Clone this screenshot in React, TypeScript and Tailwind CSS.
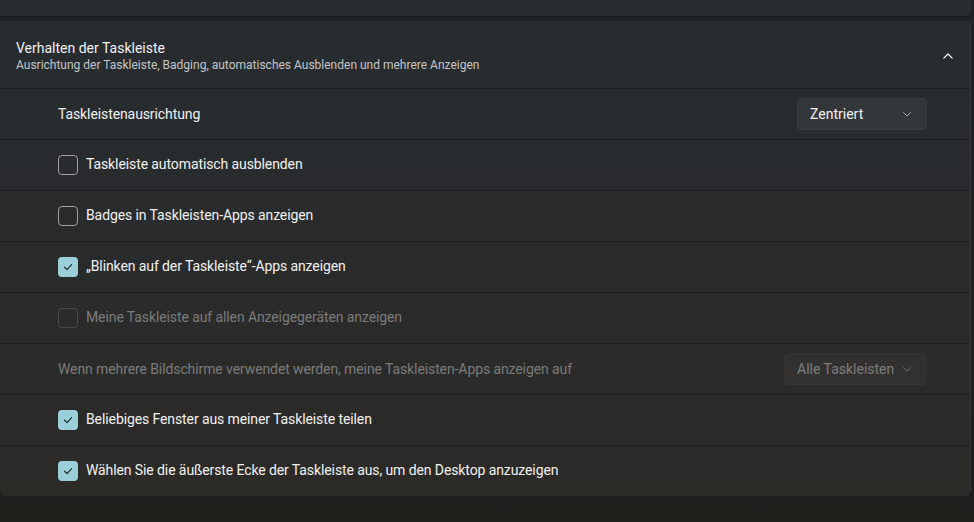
import React from 'react';

const Check = () => (
    <svg width="12" height="12" viewBox="0 0 12 12" fill="none">
        <path d="M2.5 6.2 L5 8.6 L9.6 3.6" stroke="#1b2a2e" strokeWidth="1.2" strokeLinecap="round" strokeLinejoin="round" />
    </svg>
);

const Chevron = ({ up = false, color = '#c8c8c8', size = 10 }: { up?: boolean; color?: string; size?: number }) => (
    <svg width={size} height={size} viewBox="0 0 10 10" fill="none">
        <path d={up ? 'M1.5 6.8 L5 3.3 L8.5 6.8' : 'M1.5 3.6 L5 7 L8.5 3.6'} stroke={color} strokeWidth="1" strokeLinecap="round" strokeLinejoin="round" />
    </svg>
);

interface CheckRowProps {
    label: string;
    checked?: boolean;
    disabled?: boolean;
}

const CheckRow: React.FC<CheckRowProps> = ({ label, checked, disabled }) => (
    <div className="h-[51px] border-t border-[#1c1e20] flex items-center pl-[58px]">
        {checked ? (
            <div className="w-5 h-5 rounded-[4px] bg-[#9bcfd9] flex items-center justify-center">
                <Check />
            </div>
        ) : (
            <div className={`w-5 h-5 rounded-[4px] border ${disabled ? 'border-[#4a4a4a]' : 'border-[#a0a0a0]'}`} />
        )}
        <span className={`ml-2 mb-[2px] text-[14px] tracking-[-0.1px] ${disabled ? 'text-[#7c7c7c]' : 'text-[#f2f2f2]'}`}>{label}</span>
    </div>
);

export default function App() {
    return (
        <div
            className="w-[974px] h-[522px] overflow-hidden bg-gradient-to-b from-[#1f2326] to-[#201e1b] text-white"
            style={{ fontFamily: 'Roboto, "Noto Sans", sans-serif' }}
        >
            {/* upper card, cut off at the top */}
            <div className="h-[17px] mr-[3px] bg-[#272c30] border-b border-[#1a1d1f] rounded-br-[6px]" />

            <div className="mt-[4px] mr-[3px] rounded-r-[6px] rounded-bl-[6px] bg-gradient-to-b from-[#272c30] to-[#2c2a27] border-r border-[#35383a] overflow-hidden">
                <div className="h-[67px] flex items-center pl-4 pr-[16px] pt-[3px]">
                    <div className="flex-1">
                        <div className="text-[14px] leading-[18px] text-[#f2f2f2]">Verhalten der Taskleiste</div>
                        <div className="text-[12px] leading-[17px] text-[#c4c6c7]">
                            Ausrichtung der Taskleiste, Badging, automatisches Ausblenden und mehrere Anzeigen
                        </div>
                    </div>
                    <Chevron up color="#ffffff" size={12} />
                </div>

                <div className="h-[51px] border-t border-[#1c1e20] flex items-center pl-[58px] pr-[43px]">
                    <span className="flex-1 text-[14px] tracking-[-0.1px] text-[#f2f2f2]">Taskleistenausrichtung</span>
                    <div className="w-[130px] h-[32px] rounded-[4px] bg-[#34373a] border border-[#3a3d40] flex items-center pl-3 pr-[14px]">
                        <span className="flex-1 text-[14px] text-[#f2f2f2]">Zentriert</span>
                        <Chevron color="#a8a8a8" />
                    </div>
                </div>

                <CheckRow label="Taskleiste automatisch ausblenden" />
                <CheckRow label="Badges in Taskleisten-Apps anzeigen" />
                <CheckRow label="„Blinken auf der Taskleiste“-Apps anzeigen" checked />
                <CheckRow label="Meine Taskleiste auf allen Anzeigegeräten anzeigen" disabled />

                <div className="h-[51px] border-t border-[#1c1e20] flex items-center pl-[58px] pr-[43px]">
                    <span className="flex-1 text-[14px] tracking-[-0.1px] text-[#7c7c7c]">
                        Wenn mehrere Bildschirme verwendet werden, meine Taskleisten-Apps anzeigen auf
                    </span>
                    <div className="w-[143px] h-[32px] rounded-[4px] bg-[#323130] border border-[#363534] flex items-center pl-3 pr-[14px]">
                        <span className="flex-1 text-[14px] text-[#7e7e7e]">Alle Taskleisten</span>
                        <Chevron color="#6e6e6e" />
                    </div>
                </div>

                <CheckRow label="Beliebiges Fenster aus meiner Taskleiste teilen" checked />
                <CheckRow label="Wählen Sie die äußerste Ecke der Taskleiste aus, um den Desktop anzuzeigen" checked />
            </div>
        </div>
    );
}
